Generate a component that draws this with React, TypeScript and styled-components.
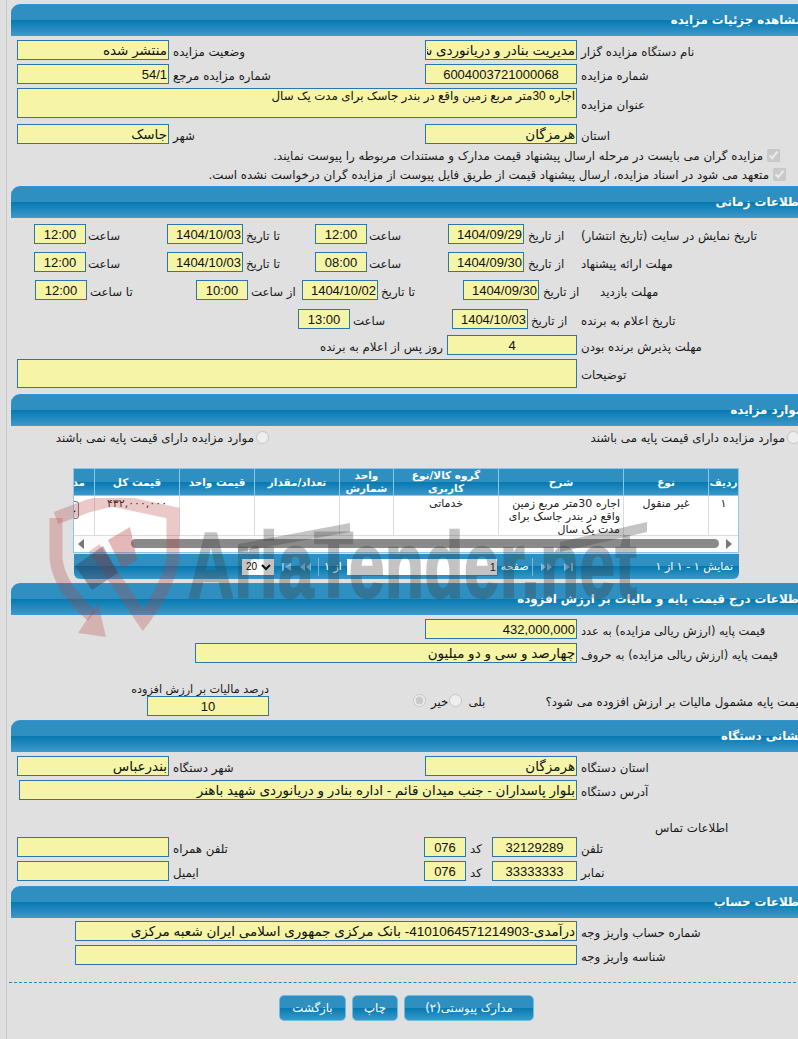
import React, { FC, ReactNode } from 'react';
import styled, { createGlobalStyle } from 'styled-components';

const GlobalStyle = createGlobalStyle`
  html, body {
    margin: 0;
    padding: 0;
    background: #e0e0e0;
    overflow: hidden;
  }
  * {
    box-sizing: border-box;
  }
`;

const BAND = 'linear-gradient(#2e8fc0 0, #2e8fc0 50%, #0579b0 50%, #3b97c9 100%)';
const TEXT_FONT = `'DejaVu Sans', Tahoma, sans-serif`;
const FIELD_FONT = `'Liberation Sans', 'DejaVu Sans', sans-serif`;

const Page = styled.div`
  position: relative;
  width: 798px;
  height: 1039px;
  overflow: hidden;
  background: #e0e0e0;
  font-family: ${TEXT_FONT};
  font-size: 11.8px;
  color: #1a1a1a;
`;

const Frame = styled.div`
  margin-left: 6px;
  width: 800px;
  height: 1039px;
  padding: 4px 0 0 4px;
  border-left: 1px solid #c9c9c9;
`;

const Block = styled.section`
  width: 792px;
`;

const BlockHead = styled.h2`
  margin: 0;
  height: 32px;
  padding: 0;
  direction: rtl;
  background: ${BAND};
  border-top: 1px solid #3193d3;
  border-bottom: 1px solid #3a9ad8;
  border-top-left-radius: 9px;
  color: #fff;
  font-size: 11.8px;
  font-weight: 700;
  line-height: 31px;
  white-space: nowrap;
  overflow: hidden;
`;

const BlockBody = styled.div<{ $h: number }>`
  display: flow-root;
  height: ${(p) => p.$h}px;
`;

const Row = styled.div<{ $mt?: number; $pl?: number }>`
  display: flex;
  direction: ltr;
  align-items: center;
  margin-top: ${(p) => p.$mt ?? 4}px;
  padding-left: ${(p) => p.$pl ?? 6}px;
`;

const Field = styled.input<{ $w: number; $center?: boolean; $fa?: boolean }>`
  flex: none;
  width: ${(p) => p.$w}px;
  height: 20px;
  margin: 0;
  padding: 0 1px;
  direction: rtl;
  background: #f6f4a6;
  border: 1px solid #2a76ad;
  border-radius: 0;
  outline: none;
  color: #111;
  font-family: ${FIELD_FONT};
  font-size: ${(p) => (p.$fa ? 13.5 : 13)}px;
  text-align: ${(p) => (p.$center ? 'center' : 'right')};
`;

const FieldArea = styled.textarea<{ $w: number; $h: number }>`
  flex: none;
  display: block;
  width: ${(p) => p.$w}px;
  height: ${(p) => p.$h}px;
  margin: 0;
  padding: 0 1px;
  direction: rtl;
  resize: none;
  overflow: hidden;
  background: #f6f4a6;
  border: 1px solid #2a76ad;
  border-radius: 0;
  outline: none;
  color: #111;
  font-family: ${FIELD_FONT};
  font-size: 11.85px;
  line-height: 15px;
`;

const Label = styled.label<{ $w?: number; $ml?: number; $fs?: number }>`
  flex: none;
  width: ${(p) => (p.$w ? `${p.$w}px` : 'auto')};
  margin-left: ${(p) => p.$ml ?? 4}px;
  padding-top: 3px;
  direction: rtl;
  font-size: ${(p) => p.$fs ?? 11.8}px;
  text-align: left;
  white-space: nowrap;
`;

const CheckRow = styled.div<{ $pr: number; $mt: number }>`
  display: flex;
  direction: rtl;
  align-items: center;
  gap: 4px;
  height: 14px;
  margin-top: ${(p) => p.$mt}px;
  padding-right: ${(p) => p.$pr}px;
  white-space: nowrap;
`;

const Check = styled.input.attrs({ type: 'checkbox' })`
  flex: none;
  width: 13px;
  height: 13px;
  margin: 0 0 2px;
`;

const Radio = styled.input.attrs({ type: 'radio' })<{ $ml?: number }>`
  flex: none;
  width: 13px;
  height: 13px;
  margin: 0 0 0 ${(p) => p.$ml ?? 0}px;
`;

const RadioRow = styled.div`
  display: flex;
  direction: rtl;
  margin-top: 5px;
  padding-right: 3px;
  height: 13px;
`;

const RadioItem = styled.div<{ $w: number }>`
  display: flex;
  align-items: center;
  gap: 2px;
  width: ${(p) => p.$w}px;
  flex: none;
  white-space: nowrap;
`;

const TableWrap = styled.div`
  margin: 24px 0 0 62px;
  width: 666px;
  height: 85px;
  overflow: hidden;
  direction: rtl;
  background: #fff;
  border: 1px solid #8cc6ea;
`;

const COLUMNS = '30px 85px 125px 105px 54px 85px 75px 85px 52px';

const HeadRow = styled.div`
  display: grid;
  grid-template-columns: ${COLUMNS};
  height: 27px;
  background: ${BAND};
  border-bottom: 1px solid #8cc6ea;
`;

const HeadCell = styled.div`
  display: flex;
  align-items: center;
  justify-content: center;
  border-left: 1px solid #8cc6ea;
  color: #fff;
  font-size: 10.5px;
  font-weight: 700;
  line-height: 13px;
  text-align: center;
`;

const DataRow = styled.div`
  display: grid;
  grid-template-columns: ${COLUMNS};
  height: 40px;
  border-bottom: 1px solid #dcdcdc;
`;

const DataCell = styled.div<{ $right?: boolean }>`
  padding: 1px 3px 0;
  border-left: 1px solid #dcdcdc;
  overflow: hidden;
  color: #222;
  font-size: 11px;
  line-height: 13px;
  text-align: ${(p) => (p.$right ? 'right' : 'center')};
`;

const RowButton = styled.button`
  display: block;
  width: 40px;
  height: 18px;
  margin: 4px 12px 0 0;
  padding: 0 2px;
  background: #f4f4f4;
  border: 1px solid #777;
  border-radius: 3px;
  font-family: ${TEXT_FONT};
  font-size: 10px;
  text-align: right;
`;

const ScrollBar = styled.div`
  display: flex;
  align-items: center;
  gap: 7px;
  height: 15px;
  padding: 0 6px 0 4px;
  background: #fbfbfb;
`;

const ScrollThumb = styled.div`
  flex: 1;
  height: 9px;
  margin-left: 40px;
  background: #8a8a8a;
  border-radius: 5px;
`;

const Pager = styled.div`
  display: flex;
  direction: ltr;
  align-items: center;
  margin: 1px 0 0 63px;
  width: 665px;
  height: 25px;
  padding-left: 168px;
  background: ${BAND};
  border-radius: 0 0 6px 6px;
  color: #fff;
  font-size: 11px;
  white-space: nowrap;
`;

const PageSelect = styled.select`
  flex: none;
  width: 32px;
  height: 16px;
  padding: 0;
  background: #fff;
  border: 0;
  border-radius: 0;
  font-family: ${FIELD_FONT};
  font-size: 10px;
`;

const PageInput = styled.input`
  flex: none;
  width: 150px;
  height: 16px;
  margin: 0 4px 0 5px;
  padding: 0 1px;
  direction: rtl;
  background: #fff;
  border: 0;
  outline: none;
  color: #111;
  font-family: ${FIELD_FONT};
  font-size: 11px;
`;

const PagerSep = styled.span<{ $ml: number }>`
  flex: none;
  width: 1px;
  height: 18px;
  margin-left: ${(p) => p.$ml}px;
  background: #79b6d8;
`;

const PagerIcon = styled.svg<{ $ml: number }>`
  flex: none;
  width: 11px;
  height: 8px;
  margin-left: ${(p) => p.$ml}px;
  fill: #7fbcdd;
`;

const PagerText = styled.span<{ $ml?: number; $auto?: boolean }>`
  direction: rtl;
  margin-left: ${(p) => (p.$auto ? 'auto' : `${p.$ml ?? 0}px`)};
  padding-right: ${(p) => (p.$auto ? '6px' : 0)};
`;

const TaxRow = styled.div`
  display: flex;
  direction: ltr;
  align-items: flex-end;
  margin-top: 21px;
  padding-left: 136px;
`;

const TaxColumn = styled.div`
  flex: none;
  width: 122px;
  direction: rtl;
`;

const TaxCaption = styled.div`
  height: 12px;
  font-size: 11.2px;
  line-height: 12px;
  white-space: nowrap;
`;

const TaxChoices = styled.div`
  display: flex;
  align-items: center;
  margin-bottom: 9px;
  height: 14px;
`;

const Rule = styled.div`
  margin: 17px 0 0 -2px;
  border-top: 1px dashed #2a85bb;
`;

const Buttons = styled.div`
  display: flex;
  direction: ltr;
  gap: 6px;
  margin-top: 12px;
  padding-left: 268px;
`;

const ActionButton = styled.button<{ $w: number }>`
  flex: none;
  width: ${(p) => p.$w}px;
  height: 26px;
  padding: 0;
  background: ${BAND};
  border: 1px solid #6bbce6;
  border-radius: 5px;
  color: #fff;
  font-family: ${TEXT_FONT};
  font-size: 11.8px;
`;

const Watermark = styled.div`
  position: absolute;
  left: 48px;
  top: 498px;
  width: 620px;
  height: 145px;
  pointer-events: none;
`;

const WatermarkLogo = styled.svg`
  display: block;
  width: 620px;
  height: 145px;
`;

const WatermarkText = styled.span`
  position: absolute;
  left: 140px;
  top: 15px;
  transform: scaleX(0.69);
  transform-origin: left top;
  opacity: 0.3;
  color: #3c3c3c;
  -webkit-text-stroke: 2.5px #3c3c3c;
  font-family: 'Liberation Sans', sans-serif;
  font-size: 92px;
  font-weight: 700;
  line-height: 105px;
  letter-spacing: 1px;
  white-space: nowrap;
`;

const Section: FC<{ title: string; height: number; children: ReactNode }> = ({ title, height, children }) => (
  <Block>
    <BlockHead>{title}</BlockHead>
    <BlockBody $h={height}>{children}</BlockBody>
  </Block>
);

// readonly yellow input, everything on this page is view only
const Value: FC<{ w: number; v?: string; center?: boolean }> = ({ w, v = '', center }) => (
  <Field $w={w} $center={center} $fa={/[\u0600-\u06ff]/.test(v)} value={v} readOnly />
);

const HEADERS = ['ردیف', 'نوع', 'شرح', 'گروه کالا/نوع کاربری', 'واحد شمارش', 'تعداد/مقدار', 'قیمت واحد', 'قیمت کل', 'مدارک'];

const App: FC = () => (
  <Page>
    <GlobalStyle />
    <Frame>
      <Section title="مشاهده جزئیات مزایده" height={150}>
        <Row>
          <Value w={152} v="منتشر شده" />
          <Label $w={252}>وضعیت مزایده</Label>
          <Value w={152} v="مدیریت بنادر و دریانوردی شهید باهنر" />
          <Label>نام دستگاه مزایده گزار</Label>
        </Row>
        <Row>
          <Value w={152} v="54/1" />
          <Label $w={252}>شماره مزایده مرجع</Label>
          <Value w={152} v="6004003721000068" center />
          <Label>شماره مزایده</Label>
        </Row>
        <Row>
          <FieldArea $w={560} $h={30} value="اجاره 30متر مربع زمین واقع در بندر جاسک برای مدت یک سال" readOnly />
          <Label>عنوان مزایده</Label>
        </Row>
        <Row $mt={6}>
          <Value w={152} v="جاسک" />
          <Label $w={252}>شهر</Label>
          <Value w={152} v="هرمزگان" />
          <Label>استان</Label>
        </Row>
        <CheckRow $pr={23} $mt={5}>
          <Check checked disabled readOnly />
          <span>مزایده گران می بایست در مرحله ارسال پیشنهاد قیمت مدارک و مستندات مربوطه را پیوست نمایند.</span>
        </CheckRow>
        <CheckRow $pr={17} $mt={5}>
          <Check checked disabled readOnly />
          <span>متعهد می شود در اسناد مزایده، ارسال پیشنهاد قیمت از طریق فایل پیوست از مزایده گران درخواست نشده است.</span>
        </CheckRow>
      </Section>

      <Section title="اطلاعات زمانی" height={176}>
        <Row $mt={6} $pl={23}>
          <Value w={52} v="12:00" center />
          <Label $ml={2} $w={79}>ساعت</Label>
          <Value w={76} v="1404/10/03" />
          <Label $ml={3} $w={69}>تا تاریخ</Label>
          <Value w={52} v="12:00" center />
          <Label $ml={2} $w={79}>ساعت</Label>
          <Value w={76} v="1404/09/29" />
          <Label $w={53}>از تاریخ</Label>
          <Label $ml={0}>تاریخ نمایش در سایت (تاریخ انتشار)</Label>
        </Row>
        <Row $mt={8} $pl={23}>
          <Value w={52} v="12:00" center />
          <Label $ml={2} $w={79}>ساعت</Label>
          <Value w={76} v="1404/10/03" />
          <Label $ml={3} $w={69}>تا تاریخ</Label>
          <Value w={52} v="08:00" center />
          <Label $ml={2} $w={79}>ساعت</Label>
          <Value w={76} v="1404/09/30" />
          <Label $w={53}>از تاریخ</Label>
          <Label $ml={0}>مهلت ارائه پیشنهاد</Label>
        </Row>
        <Row $mt={8} $pl={24}>
          <Value w={52} v="12:00" center />
          <Label $ml={3} $w={106}>تا ساعت</Label>
          <Value w={52} v="10:00" center />
          <Label $ml={3} $w={51}>از ساعت</Label>
          <Value w={76} v="1404/10/02" />
          <Label $ml={3} $w={82}>تا تاریخ</Label>
          <Value w={76} v="1404/09/30" />
          <Label $w={57}>از تاریخ</Label>
          <Label $ml={0}>مهلت بازدید</Label>
        </Row>
        <Row $mt={9} $pl={287}>
          <Value w={52} v="13:00" center />
          <Label $ml={3} $w={99}>ساعت</Label>
          <Value w={76} v="1404/10/03" />
          <Label $ml={3} $w={50}>از تاریخ</Label>
          <Label $ml={0}>تاریخ اعلام به برنده</Label>
        </Row>
        <Row $mt={6} $pl={309}>
          <Label $ml={0} $w={127}>روز پس از اعلام به برنده</Label>
          <Value w={130} v="4" center />
          <Label>مهلت پذیرش برنده بودن</Label>
        </Row>
        <Row>
          <FieldArea $w={560} $h={29} value="" readOnly />
          <Label>توضیحات</Label>
        </Row>
      </Section>

      <Section title="موارد مزایده" height={157}>
        <RadioRow>
          <RadioItem $w={531}>
            <Radio disabled name="base" />
            <span>موارد مزایده دارای قیمت پایه می باشند</span>
          </RadioItem>
          <RadioItem $w={215}>
            <Radio disabled name="base" />
            <span>موارد مزایده دارای قیمت پایه نمی باشند</span>
          </RadioItem>
        </RadioRow>
        <TableWrap>
          <HeadRow>
            {HEADERS.map((h) => (
              <HeadCell key={h}>{h}</HeadCell>
            ))}
          </HeadRow>
          <DataRow>
            <DataCell>۱</DataCell>
            <DataCell>غیر منقول</DataCell>
            <DataCell $right>اجاره 30متر مربع زمین واقع در بندر جاسک برای مدت یک سال</DataCell>
            <DataCell>خدماتی</DataCell>
            <DataCell />
            <DataCell />
            <DataCell />
            <DataCell>۴۳۲,۰۰۰,۰۰۰</DataCell>
            <DataCell>
              <RowButton>جزئیات</RowButton>
            </DataCell>
          </DataRow>
          <ScrollBar>
            <svg width="6" height="10" viewBox="0 0 6 10"><path d="M0 0 6 5 0 10Z" fill="#777" /></svg>
            <ScrollThumb />
            <svg width="6" height="10" viewBox="0 0 6 10"><path d="M6 0 0 5 6 10Z" fill="#777" /></svg>
          </ScrollBar>
        </TableWrap>
        <Pager>
          <PageSelect defaultValue="20">
            <option value="20">20</option>
          </PageSelect>
          <PagerIcon $ml={8} viewBox="0 0 11 8"><path d="M0 0H2V8H0ZM3 4 9 0V8Z" /></PagerIcon>
          <PagerIcon $ml={7} viewBox="0 0 11 8"><path d="M0 4 5 0V8ZM6 4 11 0V8Z" /></PagerIcon>
          <PagerSep $ml={7} />
          <PagerText $ml={5}>از ۱</PagerText>
          <PageInput value="1" readOnly />
          <PagerText>صفحه</PagerText>
          <PagerSep $ml={3} />
          <PagerIcon $ml={8} viewBox="0 0 11 8"><path d="M0 0 5 4 0 8ZM6 0 11 4 6 8Z" /></PagerIcon>
          <PagerIcon $ml={10} viewBox="0 0 11 8"><path d="M2 0 8 4 2 8ZM9 0H11V8H9Z" /></PagerIcon>
          <PagerText $auto>نمایش ۱ - ۱ از ۱</PagerText>
        </Pager>
      </Section>

      <Section title="اطلاعات درج قیمت پایه و مالیات بر ارزش افزوده" height={105}>
        <Row $pl={414}>
          <Value w={152} v="432,000,000" />
          <Label $fs={11.4}>قیمت پایه (ارزش ریالی مزایده) به عدد</Label>
        </Row>
        <Row $pl={184}>
          <Value w={382} v="چهارصد و سی و دو میلیون" />
          <Label $fs={11.4}>قیمت پایه (ارزش ریالی مزایده) به حروف</Label>
        </Row>
        <TaxRow>
          <TaxColumn>
            <TaxCaption>درصد مالیات بر ارزش افزوده</TaxCaption>
            <Value w={122} v="10" center />
          </TaxColumn>
          <TaxChoices>
            <Radio $ml={144} disabled defaultChecked name="tax" />
            <Label $ml={5}>خیر</Label>
            <Radio $ml={1} disabled name="tax" />
            <Label $ml={6}>بلی</Label>
            <Label $ml={60}>قیمت پایه مشمول مالیات بر ارزش افزوده می شود؟</Label>
          </TaxChoices>
        </TaxRow>
      </Section>

      <Section title="نشانی دستگاه" height={134}>
        <Row>
          <Value w={152} v="بندرعباس" />
          <Label $w={252}>شهر دستگاه</Label>
          <Value w={152} v="هرمزگان" />
          <Label>استان دستگاه</Label>
        </Row>
        <Row $pl={8}>
          <Value w={558} v="بلوار پاسداران - جنب میدان قائم - اداره بنادر و دریانوردی شهید باهنر" />
          <Label>آدرس دستگاه</Label>
        </Row>
        <Row $mt={18} $pl={644}>
          <Label $ml={0}>اطلاعات تماس</Label>
        </Row>
        <Row $mt={2}>
          <Value w={152} />
          <Label $w={251}>تلفن همراه</Label>
          <Value w={42} v="076" center />
          <Label $w={22}>کد</Label>
          <Value w={85} v="32129289" center />
          <Label>تلفن</Label>
        </Row>
        <Row>
          <Value w={152} />
          <Label $w={251}>ایمیل</Label>
          <Value w={42} v="076" center />
          <Label $w={22}>کد</Label>
          <Value w={85} v="33333333" center />
          <Label>نمابر</Label>
        </Row>
      </Section>

      <Section title="اطلاعات حساب" height={47}>
        <Row $mt={3} $pl={64}>
          <Value w={502} v="درآمدی-4101064571214903- بانک مرکزی جمهوری اسلامی ایران شعبه مرکزی" />
          <Label>شماره حساب واریز وجه</Label>
        </Row>
        <Row $pl={64}>
          <Value w={502} />
          <Label>شناسه واریز وجه</Label>
        </Row>
      </Section>

      <Rule />
      <Buttons>
        <ActionButton $w={67}>بازگشت</ActionButton>
        <ActionButton $w={46}>چاپ</ActionButton>
        <ActionButton $w={130}>مدارک پیوستی(۲)</ActionButton>
      </Buttons>
    </Frame>

    <Watermark>
      <WatermarkLogo viewBox="0 0 620 145">
        <path d="M8 20 40 8 64 2 125 15V62Q118 92 95 122L46 50" fill="none" stroke="rgba(185,60,60,.28)" strokeWidth="13" />
        <path d="M8 20V60Q10 88 44 118" fill="none" stroke="rgba(185,60,60,.28)" strokeWidth="13" />
        <path d="M30 135 50 105 58 139Z" fill="rgba(185,60,60,.28)" />
        <path d="M27 68 55 48 70 75 44 92Z" fill="rgba(60,50,70,.38)" />
        <path d="M60 42 82 29 89 62 74 70Z" fill="rgba(185,60,60,.35)" />
        <path d="M190 46 302 25V34L190 54Z" fill="rgba(60,60,60,.3)" />
        <path d="M512 44 599 24V34L512 54Z" fill="rgba(60,60,60,.3)" />
      </WatermarkLogo>
      <WatermarkText>AriaTender.net</WatermarkText>
    </Watermark>
  </Page>
);

export default App;
